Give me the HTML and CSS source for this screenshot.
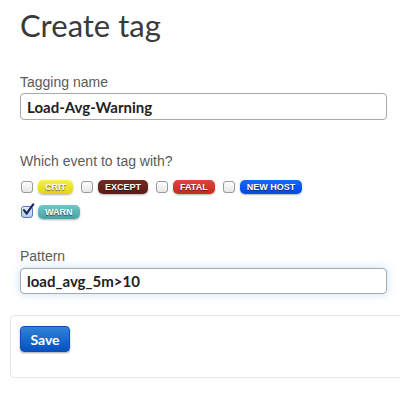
FILE: index.html
```html
<!DOCTYPE html>
<html lang="en">
<head>
  <meta charset="UTF-8">
  <title>Create tag</title>
  <link rel="stylesheet" href="styles.css">
</head>
<body>
  <div class="page">
    <h1 class="title">Create tag</h1>

    <label class="field-label" for="tag-name">Tagging name</label>
    <input class="text-input" id="tag-name" type="text" value="Load-Avg-Warning">

    <div class="field-label events-label">Which event to tag with?</div>
    <div class="events">
      <label class="event">
        <span class="check"></span>
        <span class="tag tag-crit">CRIT</span>
      </label>
      <label class="event">
        <span class="check"></span>
        <span class="tag tag-except">EXCEPT</span>
      </label>
      <label class="event">
        <span class="check"></span>
        <span class="tag tag-fatal">FATAL</span>
      </label>
      <label class="event">
        <span class="check"></span>
        <span class="tag tag-host">NEW HOST</span>
      </label>
      <label class="event">
        <span class="check checked">
          <svg viewBox="0 0 14 14" width="14" height="14">
            <path d="M3 7.2 L5.6 10.6 L12.2 1.4" fill="none" stroke="#1b2a5c" stroke-width="2.2" stroke-linecap="round" stroke-linejoin="round"/>
          </svg>
        </span>
        <span class="tag tag-warn">WARN</span>
      </label>
    </div>

    <label class="field-label pattern-label" for="pattern">Pattern</label>
    <input class="text-input focused" id="pattern" type="text" value="load_avg_5m&gt;10">

    <div class="form-actions">
      <button class="btn-save">Save</button>
    </div>
  </div>
</body>
</html>
```

FILE: styles.css
```css
* {
  box-sizing: border-box;
}

body {
  margin: 0;
  background: #fff;
  font-family: 'Liberation Sans', Arial, sans-serif;
  overflow: hidden;
}

.page {
  padding-left: 20px;
}

.title {
  margin: 0;
  padding-top: 3px;
  font-family: Lato, sans-serif;
  font-weight: 400;
  font-size: 31px;
  line-height: 44px;
  color: #3a3a3a;
}

.field-label {
  display: block;
  margin-top: 25px;
  font-size: 14px;
  line-height: 20px;
  color: #5a5a5a;
}

.text-input {
  display: block;
  width: 367px;
  height: 27px;
  margin-top: 1px;
  padding: 0 6px;
  border: 1px solid #a9a9a9;
  border-radius: 4px;
  font-family: Lato, sans-serif;
  font-weight: 700;
  font-size: 15px;
  color: #222;
  outline: none;
}

.text-input.focused {
  height: 26px;
  margin-top: 2px;
  box-shadow: 0 0 8px rgba(82, 168, 236, 0.35);
}

.events-label {
  margin-top: 31px;
}

.events {
  display: flex;
  flex-wrap: wrap;
  gap: 0 8px;
  max-width: 300px;
  margin-top: 3px;
  padding-left: 1px;
}

.event {
  display: flex;
  align-items: center;
  gap: 5px;
  height: 25px;
}

.check {
  position: relative;
  width: 12px;
  height: 12px;
  border: 1px solid #9a9a9a;
  border-radius: 3px;
  background: linear-gradient(#fff, #e6e6e6);
}

.check.checked {
  border-color: #5a78b8;
  background: linear-gradient(#e2ebfa, #b9cdef);
}

.check svg {
  position: absolute;
  left: -1px;
  top: -4px;
}

.tag {
  display: inline-block;
  height: 14px;
  padding: 0 7px;
  border-radius: 5px;
  font-size: 9px;
  font-weight: 700;
  line-height: 14px;
  color: #fff;
  text-shadow: 0 1px 1px rgba(0, 0, 0, 0.55);
  box-shadow: 0 1px 2px rgba(0, 0, 0, 0.3);
}

.tag-crit {
  background: linear-gradient(#f4ee55, #e2d410);
}

.tag-except {
  background: linear-gradient(#722a24, #5c1c19);
}

.tag-fatal {
  background: linear-gradient(#e0443a, #c42b22);
}

.tag-host {
  background: linear-gradient(#1a66fa, #0049e4);
}

.tag-warn {
  background: linear-gradient(#70c6c6, #45a5a5);
}

.pattern-label {
  margin-top: 22px;
}

.form-actions {
  margin: 21px -30px 0 -10px;
  height: 63px;
  padding: 10px 9px;
  border: 1px solid #e6e6e6;
  border-radius: 4px;
}

.btn-save {
  width: 50px;
  height: 26px;
  padding: 0;
  border: 1px solid #0a4fb0;
  border-radius: 4px;
  background: linear-gradient(#2f82d8, #0752c0);
  box-shadow: 0 1px 2px rgba(0, 0, 0, 0.35);
  font-family: Lato, sans-serif;
  font-weight: 700;
  font-size: 14px;
  color: #fff;
  cursor: pointer;
}
```
